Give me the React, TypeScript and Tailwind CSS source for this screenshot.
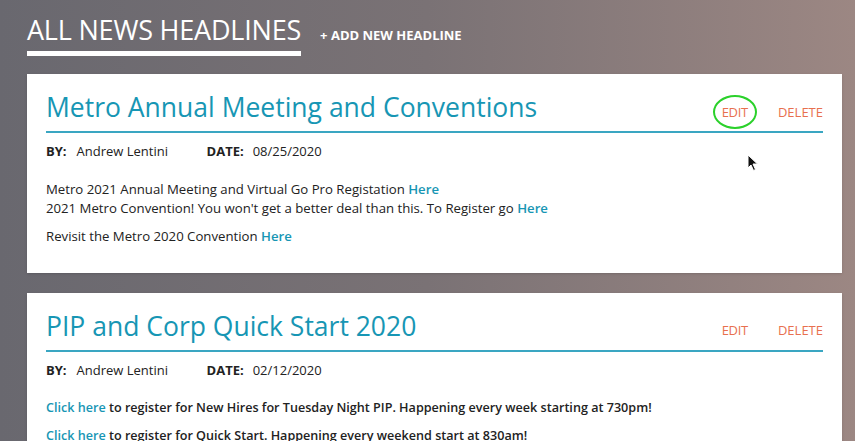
import React from 'react';

type Line = { parts: { text: string; link?: boolean }[]; gap?: boolean; bold?: boolean };

const posts: { title: string; by: string; date: string; lines: Line[]; circled?: boolean }[] = [
  {
    title: 'Metro Annual Meeting and Conventions',
    by: 'Andrew Lentini',
    date: '08/25/2020',
    circled: true,
    lines: [
      { parts: [{ text: 'Metro 2021 Annual Meeting and Virtual Go Pro Registation ' }, { text: 'Here', link: true }] },
      { parts: [{ text: "2021 Metro Convention! You won't get a better deal than this. To Register go " }, { text: 'Here', link: true }] },
      { parts: [{ text: 'Revisit the Metro 2020 Convention ' }, { text: 'Here', link: true }], gap: true },
    ],
  },
  {
    title: 'PIP and Corp Quick Start 2020',
    by: 'Andrew Lentini',
    date: '02/12/2020',
    lines: [
      { parts: [{ text: 'Click here', link: true }, { text: ' to register for New Hires for Tuesday Night PIP. Happening every week starting at 730pm!' }], bold: true },
      { parts: [{ text: 'Click here', link: true }, { text: ' to register for Quick Start. Happening every weekend start at 830am!' }], bold: true, gap: true },
    ],
  },
];

const Cursor = () => (
  <svg width="12" height="18" viewBox="0 0 12 18" className="absolute left-[747px] top-[154px]">
    <path d="M1 1 L1 14 L4 11 L6.5 16.5 L8.5 15.5 L6 10 L10.5 10 Z" fill="#111" stroke="#fff" strokeWidth="1" />
  </svg>
);

export default function App() {
  return (
    <div
      className="relative w-[855px] h-[441px] overflow-hidden bg-gradient-to-r from-[#69686f] via-[#7a7275] to-[#9c8783] font-['Open_Sans',sans-serif]"
    >
      <div className="flex items-start pl-[27px] pt-[12px]">
        <div className="flex flex-col">
          <h1 className="text-[27px] leading-[35px] text-white tracking-[-0.2px]">ALL NEWS HEADLINES</h1>
          <div className="mt-[4px] h-[5px] w-[274px] bg-white" />
        </div>
        <div className="ml-[19px] mt-[14px] text-[13px] font-bold text-white">+ ADD NEW HEADLINE</div>
      </div>

      <div className="mt-[18px] flex flex-col gap-[20px] pl-[27px] pr-[13px]">
        {posts.map((p, i) => (
          <div key={i} className="bg-white px-[19px] pt-[14px] pb-[27px] shadow-sm">
            <div className="flex items-end justify-between border-b-[2px] border-[#3aa6c2] pb-[5px]">
              <h2 className="text-[26.5px] leading-[38px] text-[#1796b4]">{p.title}</h2>
              <div className="relative flex gap-[30px] pb-[4px] text-[13px] text-[#e8704f]">
                {p.circled && (
                  <span className="absolute left-[-9px] top-[-8px] h-[34px] w-[44px] rounded-[50%] border-[2px] border-[#2bd12b]" />
                )}
                <span className="tracking-[-0.3px]">EDIT</span>
                <span>DELETE</span>
              </div>
            </div>
            <div className="mt-[9px] flex text-[13px] text-[#222]">
              <span className="font-bold">BY:</span>
              <span className="ml-[10px] w-[130px]">{p.by}</span>
              <span className="font-bold">DATE:</span>
              <span className="ml-[9px]">{p.date}</span>
            </div>
            <div className="mt-[18px] leading-[19px] text-[#222]">
              {p.lines.map((l, j) => (
                <p
                  key={j}
                  className={`${l.gap ? 'mt-[9px]' : ''} ${l.bold ? 'font-semibold text-[12.6px]' : 'text-[13.2px]'}`}
                >
                  {l.parts.map((pt, k) => (
                    <span key={k} className={pt.link ? 'font-semibold text-[#1796b4]' : ''}>
                      {pt.text}
                    </span>
                  ))}
                </p>
              ))}
            </div>
          </div>
        ))}
      </div>
      <Cursor />
    </div>
  );
}
